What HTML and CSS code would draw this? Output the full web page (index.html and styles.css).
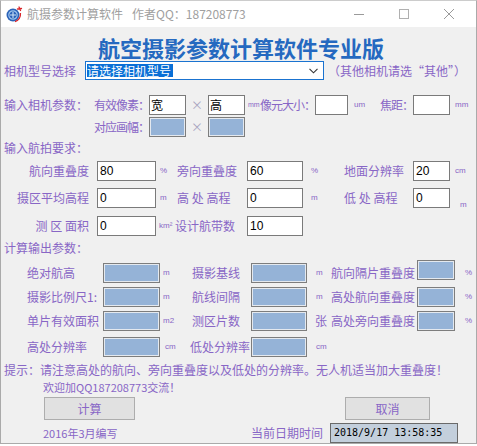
FILE: index.html
```html
<!DOCTYPE html>
<html lang="zh-CN">
<head>
<meta charset="utf-8">
<title>航摄参数计算软件</title>
<link rel="stylesheet" href="styles.css">
</head>
<body>
<div class="window">
  <div class="titlebar">
    <svg class="app-icon" width="18" height="18" viewBox="0 0 18 18">
      <circle cx="8" cy="10" r="6.5" fill="#2a62b8"/>
      <circle cx="8" cy="10" r="4.2" fill="none" stroke="#9cc3ee" stroke-width="1.2"/>
      <path d="M5 10 H11 M8 7 V13" stroke="#cfe3f7" stroke-width="1.1"/>
      <path d="M14 2 L15.5 5.5 M12.5 4 L16.5 3.5" stroke="#d9262b" stroke-width="1.3" stroke-linecap="round"/>
      <path d="M15.5 8 Q16 14 10 16.8" fill="none" stroke="#d9262b" stroke-width="1.2"/>
    </svg>
    <span class="title-text">航摄参数计算软件</span>
    <span class="title-text author">作者QQ：187208773</span>
    <div class="controls">
      <span class="ctl"><svg width="10" height="10" viewBox="0 0 10 10"><path d="M0 5.5 H10" stroke="#9a9a9a" stroke-width="1"/></svg></span>
      <span class="ctl"><svg width="10" height="10" viewBox="0 0 10 10"><rect x="0.5" y="0.5" width="9" height="9" fill="none" stroke="#b0b0b0" stroke-width="1"/></svg></span>
      <span class="ctl"><svg width="10" height="10" viewBox="0 0 10 10"><path d="M0 0 L10 10 M10 0 L0 10" stroke="#9a9a9a" stroke-width="1"/></svg></span>
    </div>
  </div>

  <div class="client">
    <h1 class="main-title">航空摄影参数计算软件专业版</h1>

    <div class="select-row">
      <span class="label model-label">相机型号选择</span>
      <div class="combo">
        <span class="combo-sel">请选择相机型号</span>
        <svg class="combo-arrow" width="9" height="6" viewBox="0 0 9 6"><path d="M0.5 0.8 L4.5 4.8 L8.5 0.8" fill="none" stroke="#333" stroke-width="1.1"/></svg>
      </div>
      <span class="label hint">（其他相机请选“其他”）</span>
    </div>

    <div class="cam-row cam-row-1">
      <span class="label sec">输入相机参数：</span>
      <span class="label rt">有效像素：</span>
      <div class="field cjk">宽</div>
      <span class="times">×</span>
      <div class="field cjk">高</div>
      <span class="unit u-cam-mm">mm</span>
      <span class="label rt">像元大小：</span>
      <div class="field"></div>
      <span class="unit u-um">um</span>
      <span class="label rt">焦距：</span>
      <div class="field"></div>
      <span class="unit u-end">mm</span>
    </div>
    <div class="cam-row cam-row-2">
      <span></span>
      <span class="label rt">对应画幅：</span>
      <div class="out"></div>
      <span class="times">×</span>
      <div class="out"></div>
    </div>

    <div class="label heading heading-1">输入航拍要求：</div>

    <div class="par-row par-row-1">
      <span class="label p-l1">航向重叠度</span>
      <div class="field">80</div>
      <span class="unit u-p3">%</span>
      <span class="label">旁向重叠度</span>
      <div class="field">60</div>
      <span class="unit u-p6">%</span>
      <span class="label p-l3">地面分辨率</span>
      <div class="field">20</div>
      <span class="unit u-p9">cm</span>
    </div>
    <div class="par-row par-row-2">
      <span class="label p-l1">摄区平均高程</span>
      <div class="field">0</div>
      <span class="unit u-p3">m</span>
      <span class="label">高 处 高程</span>
      <div class="field">0</div>
      <span class="unit u-p6">m</span>
      <span class="label p-l3">低 处 高程</span>
      <div class="field">0</div>
      <span class="unit u-p9 u-low">m</span>
    </div>
    <div class="par-row par-row-3">
      <span class="label p-l1">测 区 面积</span>
      <div class="field">0</div>
      <span class="unit u-km">km²</span>
      <span class="label p-band">设计航带数</span>
      <div class="field">10</div>
    </div>

    <div class="label heading heading-2">计算输出参数：</div>

    <div class="out-row out-row-1">
      <span class="label o-l1">绝对航高</span>
      <div class="out"></div>
      <span class="unit u-o3">m</span>
      <span class="label">摄影基线</span>
      <div class="out"></div>
      <span class="unit u-o6">m</span>
      <span class="label">航向隔片重叠度</span>
      <div class="out out-raised"></div>
      <span class="unit u-o9">%</span>
    </div>
    <div class="out-row out-row-2">
      <span class="label o-l1">摄影比例尺1:</span>
      <div class="out"></div>
      <span class="unit u-o3">m</span>
      <span class="label">航线间隔</span>
      <div class="out"></div>
      <span class="unit u-o6">m</span>
      <span class="label">高处航向重叠度</span>
      <div class="out"></div>
      <span class="unit u-o9">%</span>
    </div>
    <div class="out-row out-row-3">
      <span class="label o-l1">单片有效面积</span>
      <div class="out"></div>
      <span class="unit u-o3">m2</span>
      <span class="label">测区片数</span>
      <div class="out"></div>
      <span class="label o-zhang">张</span>
      <span class="label">高处旁向重叠度</span>
      <div class="out"></div>
      <span class="unit u-o9">%</span>
    </div>
    <div class="out-row out-row-4">
      <span class="label o-l1">高处分辨率</span>
      <div class="out"></div>
      <span class="unit u-o3 u-cm">cm</span>
      <span class="label o-low">低处分辨率</span>
      <div class="out"></div>
      <span class="unit u-o6">cm</span>
    </div>

    <div class="label tip">提示：请注意高处的航向、旁向重叠度以及低处的分辨率。无人机适当加大重叠度！</div>
    <div class="label small welcome">欢迎加QQ187208773交流！</div>

    <div class="btn-row">
      <div class="btn btn-calc">计算</div>
      <div class="btn btn-cancel">取消</div>
    </div>

    <div class="foot-row">
      <span class="label small written">2016年3月编写</span>
      <span class="label">当前日期时间</span>
      <div class="datebox">2018/9/17 13:58:35</div>
    </div>
  </div>
</div>
</body>
</html>
```

FILE: styles.css
```css
* { box-sizing: border-box; }

body {
  margin: 0;
  background: #ffffff;
  font-family: "Noto Sans CJK SC", "Noto Sans", sans-serif;
}

.window {
  width: 477px;
  height: 444px;
  border: 1px solid #aaaaaa;
  border-top-color: #cccccc;
  background: #f0f0f0;
  display: flex;
  flex-direction: column;
  overflow: hidden;
}

/* ---------- title bar ---------- */
.titlebar {
  height: 26px;
  flex: none;
  background: #ffffff;
  display: flex;
  align-items: center;
}
.app-icon { margin-left: 4px; flex: none; }
.title-text {
  font-size: 12px;
  color: #a0a0a0;
  white-space: nowrap;
  line-height: 16px;
}
.title-text:first-of-type { margin-left: 4px; }
.author { margin-left: 9px; }
.controls {
  margin-left: auto;
  margin-right: 5px;
  display: flex;
}
.ctl {
  width: 45px;
  height: 26px;
  display: flex;
  align-items: center;
  justify-content: center;
}

/* ---------- client ---------- */
.client {
  display: flex;
  flex-direction: column;
}

.label {
  font-size: 12px;
  line-height: 20px;
  color: #8866c6;
  white-space: nowrap;
}
.small { font-size: 11px; }

.main-title {
  margin: 9px 0 0 97px;
  height: 22px;
  font-size: 22px;
  line-height: 22px;
  font-weight: 700;
  color: #2569c0;
  white-space: nowrap;
}

/* select row */
.select-row {
  margin-top: 3px;
  height: 19px;
  display: flex;
  align-items: center;
}
.model-label { padding-left: 3px; width: 84px; }
.combo {
  width: 239px;
  height: 19px;
  border: 1px solid #1a73d0;
  background: #ffffff;
  display: flex;
  align-items: center;
  padding-left: 1px;
}
.combo-sel {
  background: #0a6fd6;
  color: #ffffff;
  font-size: 12px;
  line-height: 13px;
  height: 13px;
  padding-right: 2px;
}
.combo-arrow { margin-left: auto; margin-right: 5px; }
.hint { margin-left: 4px; }

/* shared field styles */
.field {
  height: 20px;
  border: 1px solid #7a7a7a;
  background: #ffffff;
  font-family: "Liberation Sans", Arial, sans-serif;
  font-size: 12px;
  line-height: 18px;
  color: #000;
  padding-left: 2px;
  white-space: nowrap;
}
.field.cjk { font-family: "Noto Sans CJK SC", sans-serif; padding-left: 1px; }
.out {
  height: 20px;
  border: 1px solid #7d7d7d;
  background: #95b3d7;
  box-shadow: inset 0 0 0 1px #e4e9ef;
}
.times {
  font-size: 12px;
  line-height: 20px;
  color: #a8a4c0;
  text-align: center;
}
.unit {
  font-family: "Liberation Sans", Arial, sans-serif;
  font-size: 8px;
  line-height: 20px;
  color: #8866c6;
  white-space: nowrap;
}

/* camera rows */
.cam-row {
  display: grid;
  grid-template-columns: 90px 58px 37px 22px 37px 14px 56px 33px 32px 33px 37px 1fr;
  height: 20px;
  align-items: center;
}
.cam-row-1 { margin-top: 15px; }
.cam-row-2 { margin-top: 2px; }
.sec { padding-left: 3px; }
.rt {
  display: flex;
  justify-content: flex-end;
  letter-spacing: -1px;
}
.u-cam-mm { padding-left: 3px; font-size: 7px; }
.u-um { padding-left: 6px; }
.u-end { padding-left: 5px; }

.heading { padding-left: 3px; height: 16px; line-height: 16px; }
.heading-1 { margin-top: 3px; }
.heading-2 { margin-top: 4px; }

/* input parameter rows */
.par-row {
  display: grid;
  grid-template-columns: 96px 59px 21px 70px 56px 40px 70px 37px 1fr;
  height: 20px;
  align-items: center;
}
.par-row-1 { margin-top: 5px; }
.par-row-2 { margin-top: 7px; }
.par-row-3 { margin-top: 8px; }
.p-l1 { text-align: right; padding-right: 8px; }
.p-l3 { padding-left: 1px; }
.p-band { margin-left: -2px; }
.u-p3 { padding-left: 4px; }
.u-p6 { padding-left: 8px; }
.u-p9 { padding-left: 5px; }
.u-low { align-self: end; padding-left: 10px; line-height: 12px; margin-bottom: -3px; }
.u-km { padding-left: 3px; }

/* output rows */
.out-row {
  display: grid;
  grid-template-columns: 102px 57px 32px 59px 56px 24px 86px 38px 1fr;
  height: 20px;
  align-items: center;
}
.out-row-1 { margin-top: 7px; }
.out-row-2 { margin-top: 4px; }
.out-row-3 { margin-top: 4px; }
.out-row-4 { margin-top: 6px; }
.o-l1 { padding-left: 26px; }
.o-low { margin-left: -2px; }
.o-zhang { padding-left: 8px; }
.out-raised { align-self: start; margin-top: -3px; }
.u-o3 { padding-left: 3px; }
.u-cm { padding-left: 5px; }
.u-o6 { padding-left: 9px; }
.u-o9 { padding-left: 10px; }

/* bottom area */
.tip { margin-top: 5px; padding-left: 3px; height: 16px; line-height: 16px; }
.welcome { margin-top: 1px; padding-left: 42px; height: 16px; line-height: 16px; }

.btn-row {
  margin-top: 2px;
  display: flex;
  height: 23px;
}
.btn {
  height: 23px;
  background: #e1e1e1;
  border: 1px solid #adadad;
  font-size: 12px;
  line-height: 21px;
  color: #8866c6;
  text-align: center;
}
.btn-calc { margin-left: 43px; width: 91px; }
.btn-cancel { margin-left: 210px; width: 85px; }

.foot-row {
  margin-top: 3px;
  display: grid;
  grid-template-columns: 250px 79px 128px;
  height: 20px;
  align-items: center;
}
.written { padding-left: 42px; }
.datebox {
  height: 20px;
  border: 1px solid #6a6a6a;
  background: #c3cfdc;
  font-family: "DejaVu Sans Mono", "Liberation Mono", monospace;
  font-size: 10px;
  line-height: 18px;
  color: #000;
  padding-left: 3px;
  white-space: nowrap;
}
```
